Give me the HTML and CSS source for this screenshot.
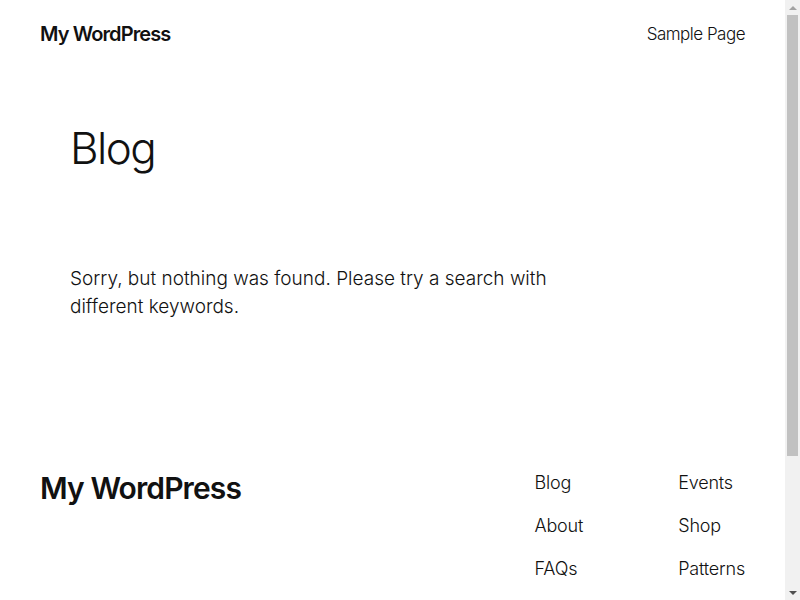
FILE: index.html
```html
<!DOCTYPE html>
<html lang="en">
<head>
<meta charset="utf-8">
<title>Blog – My WordPress</title>
<link rel="stylesheet" href="styles.css">
</head>
<body>
<div class="page">
  <header class="site-header">
    <a class="site-title" href="#">My WordPress</a>
    <nav class="header-nav"><a href="#">Sample Page</a></nav>
  </header>
  <main class="site-main">
    <h1 class="page-title">Blog</h1>
    <p class="no-results">Sorry, but nothing was found. Please try a search with different keywords.</p>
  </main>
  <footer class="site-footer">
    <div class="footer-top">
      <a class="footer-title" href="#">My WordPress</a>
      <div class="footer-navs">
        <ul class="footer-nav">
          <li><a href="#">Blog</a></li>
          <li><a href="#">About</a></li>
          <li><a href="#">FAQs</a></li>
          <li><a href="#">Authors</a></li>
        </ul>
        <ul class="footer-nav">
          <li><a href="#">Events</a></li>
          <li><a href="#">Shop</a></li>
          <li><a href="#">Patterns</a></li>
          <li><a href="#">Themes</a></li>
        </ul>
      </div>
    </div>
    <div class="footer-bottom">
      <p class="footer-credit">Twenty Twenty-Five</p>
      <p class="footer-credit">Designed with <a href="#">WordPress</a></p>
    </div>
  </footer>
</div>
<div class="scrollbar" aria-hidden="true">
  <div class="sb-btn"><span class="sb-up"></span></div>
  <div class="sb-track"><div class="sb-thumb"></div></div>
  <div class="sb-btn"><span class="sb-down"></span></div>
</div>
</body>
</html>
```
FILE: styles.css
```css
html, body {
  margin: 0;
  padding: 0;
  background: #ffffff;
  color: #111111;
  font-family: Inter, "Noto Sans", sans-serif;
}
a {
  color: inherit;
  text-decoration: none;
}
.page {
  margin-right: 15px;
}
.site-header {
  display: flex;
  justify-content: space-between;
  align-items: center;
  height: 68px;
  padding: 0 40px;
}
.site-title {
  font-size: 20px;
  font-weight: 600;
  letter-spacing: -0.9px;
}
.header-nav a {
  font-size: 17px;
  font-weight: 300;
  letter-spacing: -0.5px;
}
.site-main {
  padding: 54px 70px 0;
  height: 372px;
  box-sizing: border-box;
}
.page-title {
  margin: 0;
  font-size: 44px;
  font-weight: 300;
  line-height: 1.2;
  letter-spacing: -1.6px;
}
.no-results {
  margin: 90px 0 0;
  max-width: 490px;
  font-size: 19px;
  font-weight: 300;
  line-height: 28px;
  letter-spacing: 0;
}
.site-footer {
  padding: 30px 40px 74px;
}
.footer-top {
  display: flex;
  justify-content: space-between;
  align-items: flex-start;
}
.footer-title {
  font-size: 30px;
  font-weight: 600;
  letter-spacing: -0.9px;
  line-height: 36px;
  margin-top: 0;
}
.footer-navs {
  display: flex;
  gap: 80px;
}
.footer-nav {
  list-style: none;
  margin: 0;
  padding: 0;
  display: flex;
  flex-direction: column;
  gap: 18px;
}
.footer-nav a {
  font-size: 18px;
  font-weight: 300;
  line-height: 25px;
  letter-spacing: -0.2px;
}
.footer-bottom {
  display: flex;
  justify-content: space-between;
  margin-top: 60px;
}
.footer-credit {
  margin: 0;
  font-size: 15px;
  font-weight: 300;
}
.scrollbar {
  position: fixed;
  top: 0;
  right: 0;
  width: 15px;
  height: 100vh;
  background: #f1f1f1;
  display: flex;
  flex-direction: column;
}
.sb-btn {
  height: 15px;
  display: flex;
  align-items: center;
  justify-content: center;
}
.sb-up {
  width: 0;
  height: 0;
  border-left: 4px solid transparent;
  border-right: 4px solid transparent;
  border-bottom: 4px solid #a3a3a3;
}
.sb-down {
  width: 0;
  height: 0;
  border-left: 4px solid transparent;
  border-right: 4px solid transparent;
  border-top: 4px solid #505050;
}
.sb-track {
  flex: 1;
  padding: 0 2px;
}
.sb-thumb {
  height: 441px;
  background: #c1c1c1;
}
```
